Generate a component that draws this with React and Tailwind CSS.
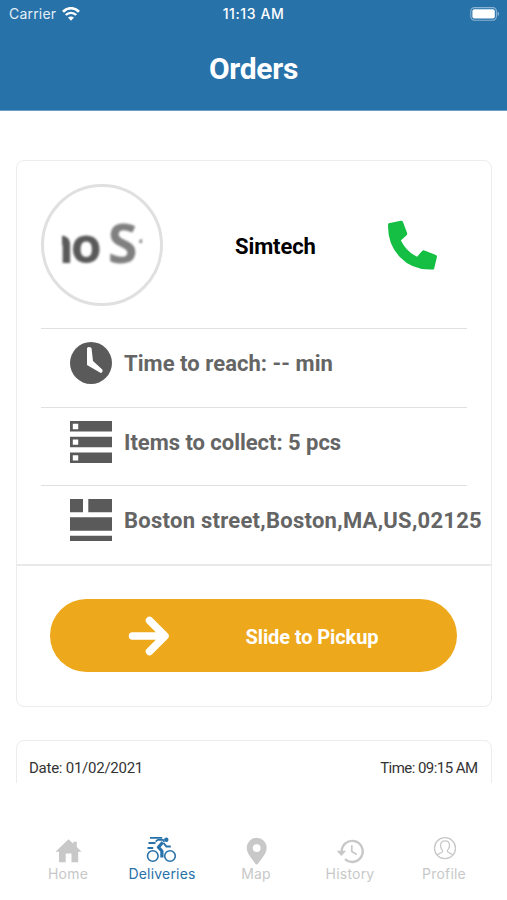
import React from 'react'

const StatusBar = () => {
  return (
    <div className="grid grid-cols-3 items-center h-[28px] pl-[9px] pr-[7px] font-['Inter',sans-serif] text-white text-[14px] leading-none">
      <div className="flex items-center gap-[6px]">
        <span className="tracking-[0.2px] text-[#e4eef6]">Carrier</span>
        <svg width="18" height="14" viewBox="0 0 18 14" fill="none" stroke="currentColor">
          <path d="M1 4.700C5.500 .1 12.500 .1 17 4.700" strokeWidth="2.700" />
          <path d="M3.800 8C6.600 5.100 11.400 5.100 14.200 8" strokeWidth="2.400" />
          <path d="M9 13.800L6 10.600C7.700 9 10.300 9 12 10.600Z" fill="currentColor" stroke="none" />
        </svg>
      </div>
      <span className="-ml-[2px] text-center font-medium tracking-[0.600px] whitespace-nowrap">11:13 AM</span>
      <svg className="justify-self-end" width="30" height="14" viewBox="0 0 30 14">
        <rect x=".8" y=".6" width="25.600" height="12.600" rx="3.600" fill="none" stroke="#8bb3d3" strokeWidth="1.100" />
        <rect x="2.400" y="2.200" width="22.400" height="9.400" rx="2" fill="#fff" />
        <path d="M27.600 4.800c2 .6 2 3.600 0 4.200z" fill="#8bb3d3" />
      </svg>
    </div>
  )
}

const PhoneIcon = () => (
  <svg className="ml-[72px]" width="49" height="50" viewBox="0 0 49 50" fill="#14bf43" stroke="#14bf43" strokeWidth="1.500" strokeLinejoin="round">
    <path d="M.9 4L13 1.400q.8-.1 1.200.7l4.200 11.200q.2.800-.3 1.300L12 20.200Q17.500 32 29.200 37.700l5.700-6.400q.6-.5 1.300-.2l11.400 4.500q.7.400.6 1.200L45.400 48.700C18 50.500-.5 29 .9 4z" />
  </svg>
)

const ClockIcon = () => (
  <svg width="42" height="42" viewBox="0 0 42 42" fill="#5a5a5a">
    <circle cx="21" cy="21" r="21" />
    <path d="M17 6q2-2 4.500 0l1.500 13 9.300 8.500q1 2.500-1.500 3.500L17 23z" fill="#fff" />
  </svg>
)

const ItemsIcon = () => (
  <svg width="42" height="42" viewBox="0 0 42 42" fill="#5a5a5a">
    <path d="M0 0h42v10.500H0zM0 15.700h42v10.500H0zM0 31.500h42V42H0z" />
    <path d="M2.800 2.800h5.400v5.400H2.800zM2.800 18.400h5.400v5.400H2.800zM2.800 34.200h5.400v5.400H2.800z" fill="#fff" />
  </svg>
)

const AddressIcon = () => (
  <svg width="42" height="42" viewBox="0 0 42 42" fill="#5a5a5a">
    <path d="M0 0h13v13.300H0zM18.300 0H42v13.300H18.300zM0 18.300h42v13.400H0zM0 36.700h42V42H0z" />
  </svg>
)

const HomeIcon = () => (
  <svg width="28" height="28" viewBox="0 0 28 28" fill="currentColor">
    <path d="M14.500 2.300L19.300 6.800V4.800h3.500v5.300L27.500 14.800h-3.300v10.500h-6.700v-8.800h-5.800v8.800H5V14.800H1.500z" />
  </svg>
)

const BikeIcon = () => (
  <svg width="32" height="28" viewBox="0 0 32 28" fill="none" stroke="currentColor" strokeWidth="1.600">
    <circle cx="6.800" cy="19" r="5.300" />
    <circle cx="24" cy="19" r="5.300" />
    <circle cx="20.300" cy="2.800" r="2.200" fill="currentColor" stroke="none" />
    <path d="M4 .9h12.200M2.500 6h7M1.500 11h5.700" strokeWidth="1.800" />
    <path d="M16.800 5.200L12.400 10.200l3.500 3.800v6.500" strokeWidth="3.200" strokeLinejoin="round" />
    <path d="M9.600 4.600l2.200-1.800h5.300l1 2" strokeWidth="1.700" />
    <path d="M17.600 6l2.800 3.500h4.400" strokeWidth="2" />
  </svg>
)

const PinIcon = () => (
  <svg width="28" height="28" viewBox="0 0 28 28" fill="currentColor">
    <path fillRule="evenodd" d="M14.700 .8a10 10 0 0 0-10 10c0 6.200 5.500 10.700 8.600 16 .6 1 2.200 1 2.800 0 3.100-5.300 8.600-9.800 8.600-16a10 10 0 0 0-10-10zm0 6.400a3.900 3.900 0 1 1 0 7.800 3.900 3.900 0 0 1 0-7.800z" />
  </svg>
)

const HistoryIcon = () => (
  <svg width="28" height="28" viewBox="0 0 28 28" fill="none" stroke="currentColor">
    <path d="M5.700 15A10.500 10.500 0 1 1 9 22.100" strokeWidth="2.400" />
    <path d="M.6 13.800h9.600l-4.800 5.300z" fill="currentColor" stroke="none" />
    <path d="M15.800 8.300v6.300l5 3" strokeWidth="1.700" />
  </svg>
)

const ProfileIcon = () => (
  <svg width="28" height="28" viewBox="0 0 28 28" fill="none" stroke="currentColor" strokeWidth="1.300">
    <circle cx="15" cy="11.200" r="10.500" />
    <path d="M7.300 18.400c.6-2.400 5.200-2.200 5.400-4.200.1-1.200-2.200-2.300-2.200-6 0-2.600 1.900-4.400 4.500-4.400s4.500 1.800 4.500 4.400c0 3.700-2.300 4.800-2.200 6 .2 2 4.800 1.800 5.400 4.200" />
  </svg>
)

const InfoRow = ({ icon, text, spacing }) => {
  return (
    <div className="flex items-start h-[78.500px] border-t-[1.500px] border-[#e0e0e0] pl-[29px] pt-[13px]">
      <div className="shrink-0">{icon}</div>
      <span className={`ml-[12px] mt-[8px] text-[22px] leading-[28px] font-bold text-[#656565] whitespace-nowrap ${spacing}`}>
        {text}
      </span>
    </div>
  )
}

const Avatar = () => (
  <div className="w-[122px] h-[122px] rounded-full border-[3px] border-[#e0e0e0] flex items-center justify-center">
    <div className="w-[80px] h-[56px] overflow-hidden flex items-baseline font-['Open_Sans',sans-serif] font-bold leading-[50px] blur-[0.800px] whitespace-nowrap">
      <span className="-ml-[21px] text-[50px] tracking-[-3px] text-[#5a5a5a]">no</span>
      <span className="ml-[9px] text-[54px] text-[#808080]">S</span>
      <span className="ml-[1px] text-[44px] text-[#808080]">t</span>
    </div>
  </div>
)

const OrderCard = () => {
  return (
    <div className="ml-[16px] mr-[15px] mt-[49px] h-[547px] border-[1.500px] border-[#ececec] rounded-[8px] flex flex-col">
      <div className="mx-[24px] flex items-center h-[167px]">
        <Avatar />
        <span className="ml-[72px] mt-[3px] w-[81px] text-[22px] font-bold text-black tracking-[-0.100px]">Simtech</span>
        <PhoneIcon />
      </div>
      <div className="mx-[24px] h-[236px]">
        <InfoRow icon={<ClockIcon />} text="Time to reach: -- min" spacing="tracking-[0.050px]" />
        <InfoRow icon={<ItemsIcon />} text="Items to collect: 5 pcs" spacing="tracking-[-0.030px]" />
        <InfoRow icon={<AddressIcon />} text="Boston street,Boston,MA,US,02125" spacing="tracking-[0.260px]" />
      </div>
      <div className="border-t-2 border-[#e9e9e9] pl-[33px] pr-[34px] pt-[33px]">
        <button className="flex items-center w-full h-[73px] rounded-full bg-[#eda81c] pl-[78px] text-white">
          <svg width="42" height="42" viewBox="0 0 42 42" fill="none" stroke="currentColor" strokeWidth="7.500" strokeLinecap="round" strokeLinejoin="round">
            <path d="M4.500 21h32M21.500 5.500l15.500 15.500L21.500 36.500" />
          </svg>
          <span className="ml-[75.500px] mt-[2px] text-[20px] font-bold tracking-[-0.100px] whitespace-nowrap">Slide to Pickup</span>
        </button>
      </div>
    </div>
  )
}

const tabs = [
  { name: 'Home', icon: <HomeIcon /> },
  { name: 'Deliveries', icon: <BikeIcon />, active: true },
  { name: 'Map', icon: <PinIcon /> },
  { name: 'History', icon: <HistoryIcon /> },
  { name: 'Profile', icon: <ProfileIcon /> },
]

const TabBar = () => {
  return (
    <div className="grid grid-cols-5 pl-[21px] pr-[16px] pt-[54px] font-['Inter',sans-serif] text-[14px] leading-[18px]">
      {tabs.map((tab) => (
        <div
          key={tab.name}
          className={`flex flex-col items-center ${tab.active ? 'text-[#2872aa]' : 'text-[#c8c8c8]'}`}
        >
          {tab.icon}
          <span className="tracking-[0.200px]">{tab.name}</span>
        </div>
      ))}
    </div>
  )
}

const App = () => {
  return (
    <div className="w-[507px] h-[900px] overflow-hidden bg-white font-['Roboto',sans-serif]">
      <header className="h-[111px] bg-[#2872aa] border-b border-[#6a9dc5] text-white">
        <StatusBar />
        <h1 className="mt-[22px] text-center text-[30px] leading-[38px] font-bold tracking-[-0.300px]">Orders</h1>
      </header>
      <main className="h-[672px] overflow-hidden">
        <OrderCard />
        <div className="ml-[16px] mr-[15px] mt-[33px] h-[120px] border-[1.500px] border-[#ececec] rounded-[8px] pl-[12px] pr-[13.500px] pt-[17px] flex justify-between text-[15px] leading-[20px] text-[#333]">
          <span className="tracking-[-0.250px]">Date: 01/02/2021</span>
          <span className="tracking-[-0.550px]">Time: 09:15 AM</span>
        </div>
      </main>
      <TabBar />
    </div>
  )
}

export default App
